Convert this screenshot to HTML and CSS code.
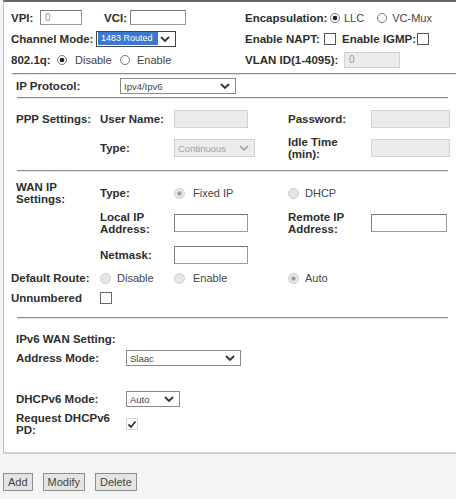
FILE: index.html
```html
<!DOCTYPE html>
<html lang="en">
<head>
    <meta charset="UTF-8" />
    <title>WAN Configuration</title>
    <link rel="stylesheet" href="styles.css">
</head>
<body>

<div class="panel">
    <div class="top">
        <div class="trow">
            <div class="tleft">
                <span class="lbl w-vpi">VPI:</span><input class="txt vpi" value="0">
                <span class="lbl w-vci">VCI:</span><input class="txt vci" value="">
            </div>
            <div class="tright">
                <span class="lbl w-enc">Encapsulation:</span>
                <span class="radio on"></span><span class="opt gap4">LLC</span>
                <span class="radio sp13"></span><span class="opt gap5">VC-Mux</span>
            </div>
        </div>
        <div class="trow">
            <div class="tleft">
                <span class="lbl w-chan">Channel Mode:</span>
                <span class="sel chan"><span class="hl">1483 Routed</span><svg width="10" height="6" viewBox="0 0 10 6"><polyline points="1,1 5,5 9,1" /></svg></span>
            </div>
            <div class="tright">
                <span class="lbl w-napt">Enable NAPT:</span><span class="check"></span>
                <span class="lbl w-igmp sp6">Enable IGMP:</span><span class="check"></span>
            </div>
        </div>
        <div class="trow">
            <div class="tleft">
                <span class="lbl w-dot1q">802.1q:</span>
                <span class="radio on"></span><span class="opt gap8 w-dis">Disable</span>
                <span class="radio sp8"></span><span class="opt gap7">Enable</span>
            </div>
            <div class="tright">
                <span class="lbl w-vlan">VLAN ID(1-4095):</span><input class="txt vlan" value="0" disabled>
            </div>
        </div>
    </div>

    <div class="rule full"></div>

    <div class="proto">
        <span class="lbl w-proto">IP Protocol:</span>
        <span class="sel ipsel"><span>Ipv4/Ipv6</span><svg width="10" height="6" viewBox="0 0 10 6"><polyline points="1,1 5,5 9,1" /></svg></span>
    </div>

    <div class="rule inner"></div>

    <div class="sect ppp">
        <div class="row">
            <div class="c1 lbl">PPP Settings:</div>
            <div class="c2 lbl">User Name:</div>
            <div class="c3"><input class="txt field" disabled></div>
            <div class="c4 lbl">Password:</div>
            <div class="c5"><input class="txt field wide" disabled></div>
        </div>
        <div class="row r-type">
            <div class="c1"></div>
            <div class="c2 lbl">Type:</div>
            <div class="c3"><span class="sel off typesel"><span>Continuous</span><svg width="10" height="6" viewBox="0 0 10 6"><polyline points="1,1 5,5 9,1" /></svg></span></div>
            <div class="c4 lbl two">Idle Time<br>(min):</div>
            <div class="c5"><input class="txt field wide" disabled></div>
        </div>
    </div>

    <div class="rule inner"></div>

    <div class="sect wan">
        <div class="row">
            <div class="c1 lbl two">WAN IP<br>Settings:</div>
            <div class="c2 lbl">Type:</div>
            <div class="c3"><span class="radio off on"></span><span class="opt gap8">Fixed IP</span></div>
            <div class="c4"><span class="radio off"></span><span class="opt gap6">DHCP</span></div>
        </div>
        <div class="row r-local">
            <div class="c1"></div>
            <div class="c2 lbl two">Local IP<br>Address:</div>
            <div class="c3"><input class="txt field"></div>
            <div class="c4 lbl two">Remote IP<br>Address:</div>
            <div class="c5"><input class="txt field remote"></div>
        </div>
        <div class="row r-mask">
            <div class="c1"></div>
            <div class="c2 lbl">Netmask:</div>
            <div class="c3"><input class="txt field"></div>
        </div>
        <div class="row r-route">
            <div class="c1 lbl out">Default Route:</div>
            <div class="c2"><span class="radio off"></span><span class="opt gap6">Disable</span></div>
            <div class="c3"><span class="radio off"></span><span class="opt gap8">Enable</span></div>
            <div class="c4"><span class="radio off on"></span><span class="opt gap6">Auto</span></div>
        </div>
        <div class="row">
            <div class="c1 lbl out">Unnumbered</div>
            <div class="c2"><span class="check big"></span></div>
        </div>
    </div>

    <div class="rule inner"></div>

    <div class="sect v6">
        <div class="row r-head">
            <div class="lbl">IPv6 WAN Setting:</div>
        </div>
        <div class="row r-addr">
            <div class="k lbl">Address Mode:</div>
            <span class="sel slaac"><span>Slaac</span><svg width="10" height="6" viewBox="0 0 10 6"><polyline points="1,1 5,5 9,1" /></svg></span>
        </div>
        <div class="row r-dhcp">
            <div class="k lbl">DHCPv6 Mode:</div>
            <span class="sel auto"><span>Auto</span><svg width="10" height="6" viewBox="0 0 10 6"><polyline points="1,1 5,5 9,1" /></svg></span>
        </div>
        <div class="row r-pd">
            <div class="k lbl two">Request DHCPv6<br>PD:</div>
            <span class="check big ticked"><svg width="10" height="9" viewBox="0 0 10 9"><polyline points="1.5,4.5 4,7 8.5,1.5" /></svg></span>
        </div>
    </div>
</div>

<div class="buttons">
    <button class="btn">Add</button>
    <button class="btn">Modify</button>
    <button class="btn">Delete</button>
</div>

</body>
</html>
```

FILE: styles.css
```css
body {
    margin: 0;
    background-color: #f4f4f4;
    font-family: "Liberation Sans", Arial, sans-serif;
    font-size: 11px;
    color: #333;
}

.panel {
    margin-left: 3px;
    background: white;
    border-left: 1px solid #bdbdbd;
    border-top: 2px solid #666;
    border-bottom: 2px solid #cfcfcf;
}

.lbl {
    display: inline-block;
    font-weight: bold;
    font-size: 11.5px;
    color: #2e2e2e;
    white-space: nowrap;
}

.lbl.two {
    line-height: 12px;
}

.opt {
    color: #444;
    white-space: nowrap;
}

/* top block */
.top {
    padding: 5px 0 0 7px;
}

.trow {
    display: flex;
    align-items: center;
    height: 21px;
}

.tleft {
    width: 234px;
    display: flex;
    align-items: center;
}

.tright {
    display: flex;
    align-items: center;
}

.w-vpi { width: 29px; }
.w-vci { width: 26px; margin-left: 22px; }
.w-chan { width: 85px; }
.w-dot1q { width: 46px; }
.w-dis { width: 37px; }
.w-enc { width: 85px; }
.w-napt { width: 79px; }
.w-igmp { width: 75px; }
.w-vlan { width: 99px; }
.w-proto { width: 104px; }

.gap4 { margin-left: 4px; }
.gap5 { margin-left: 5px; }
.gap6 { margin-left: 6px; }
.gap7 { margin-left: 7px; }
.gap8 { margin-left: 8px; }
.sp6 { margin-left: 6px; }
.sp8 { margin-left: 8px; }
.sp13 { margin-left: 13px; }

/* form controls */
.txt {
    box-sizing: border-box;
    height: 18px;
    margin: 0;
    padding: 0 4px;
    border: 1px solid #9a9a9a;
    border-top-color: #777;
    border-left-color: #808080;
    background: white;
    font-family: "Liberation Sans", Arial, sans-serif;
    font-size: 10px;
    color: #555;
    outline: none;
}

.txt:disabled {
    background: #ebebeb;
    border-color: #d2d2d2;
    color: #999;
}

.vpi { width: 42px; height: 15px; color: #a8906c; }
.vci { width: 56px; height: 15px; }
.vlan { width: 56px; height: 16px; }
.field { width: 74px; }
.field.wide { width: 79px; }
.field.remote { width: 76px; }

.sel {
    box-sizing: border-box;
    display: inline-flex;
    align-items: center;
    justify-content: space-between;
    height: 16px;
    padding: 0 5px 0 3px;
    border: 1px solid #8a8a8a;
    background: white;
    font-size: 9.5px;
    color: #444;
    white-space: nowrap;
}

.sel svg {
    flex-shrink: 0;
}

.sel svg polyline {
    fill: none;
    stroke: #333;
    stroke-width: 1.8;
}

.sel.chan {
    width: 80px;
    padding-left: 1px;
    border-color: #444;
}

.sel .hl {
    background: #3b78d0;
    color: white;
    padding: 1px 3px;
    width: 60px;
    box-sizing: border-box;
    font-size: 9px;
    line-height: 11px;
}

.ipsel { width: 116px; }
.slaac { width: 115px; }
.auto { width: 54px; }

.sel.off {
    width: 81px;
    height: 18px;
    background: #ececec;
    border-color: #d0d0d0;
    color: #a0a0a0;
}

.sel.off svg polyline {
    stroke: #aaa;
}

.radio {
    display: inline-block;
    box-sizing: border-box;
    width: 10px;
    height: 10px;
    border: 1px solid #777;
    border-radius: 50%;
    background: white;
    flex-shrink: 0;
}

.radio.on {
    background: radial-gradient(circle, #222 0 2px, white 2.6px);
}

.radio.off {
    width: 11px;
    height: 11px;
    border-color: #cdcdcd;
    background: #e6e6e6;
}

.radio.off.on {
    background: radial-gradient(circle, #9a9a9a 0 1.8px, #e6e6e6 2.4px);
}

.check {
    display: inline-flex;
    align-items: center;
    justify-content: center;
    box-sizing: border-box;
    width: 12px;
    height: 12px;
    border: 1px solid #555;
    background: white;
}

.check.big {
    border-color: #666;
}

.check.ticked {
    border-color: #d4d4d4;
}

.check svg polyline {
    fill: none;
    stroke: #333;
    stroke-width: 1.8;
}

/* separators */
.rule {
    border-top: 1px solid #8c8c8c;
    border-bottom: 1px solid #e2e2e2;
}

.rule.full {
    margin: 3px 0 0 8px;
}

.rule.inner {
    margin: 1px 8px 0 13px;
}

.proto {
    display: flex;
    align-items: center;
    height: 20px;
    margin-top: 1px;
    padding-left: 12px;
}

/* table-like sections */
.sect {
    padding-left: 12px;
}

.row {
    display: flex;
    align-items: center;
    height: 20px;
}

.c1 { width: 84px; }
.c2 { width: 74px; }
.c3 { width: 114px; }
.c4 { width: 83px; }
.c5 { flex: 1; }

.c2, .c3, .c4, .c5 {
    display: flex;
    align-items: center;
}

.c2.lbl, .c4.lbl { display: block; }

.lbl.out {
    margin-left: -5px;
    width: 89px;
}

.ppp { padding-top: 10px; padding-bottom: 11px; }
.ppp .r-type { margin-top: 9px; }

.wan { padding-top: 11px; padding-bottom: 8px; }
.wan .r-local { margin-top: 10px; }
.wan .r-mask { margin-top: 12px; }
.wan .r-route { margin-top: 3px; }

.v6 { padding-top: 10px; padding-bottom: 14px; }
.v6 .k { width: 110px; }
.v6 .r-addr { height: 18px; }
.v6 .r-dhcp { margin-top: 22px; }
.v6 .r-pd { margin-top: 1px; height: 28px; }

/* buttons */
.buttons {
    display: flex;
    gap: 10px;
    margin: 19px 0 0 3px;
}

.btn {
    height: 18px;
    padding: 0 4px;
    border: 1px solid #8f8f8f;
    background: #e4e4e4;
    font-family: "Liberation Sans", Arial, sans-serif;
    font-size: 11px;
    color: #444;
    cursor: pointer;
}
```
